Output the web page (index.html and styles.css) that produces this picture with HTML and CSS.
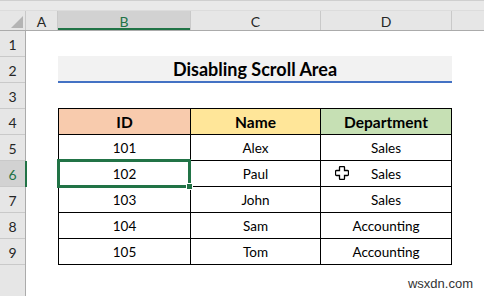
FILE: index.html
```html
<!DOCTYPE html>
<html>
<head>
<meta charset="utf-8">
<link rel="stylesheet" href="styles.css">
</head>
<body>
<div class="app">
  <div class="topbar"></div>
  <div class="colheads">
    <div class="ch corner"><svg class="tri" width="12" height="12" viewBox="0 0 12 12"><polygon points="12,0 12,12 0,12" fill="#b4b4b4"/></svg></div>
    <div class="ch col-a">A</div>
    <div class="ch col-b sel">B</div>
    <div class="ch col-c">C</div>
    <div class="ch col-d">D</div>
    <div class="ch col-e"></div>
  </div>
  <div class="main">
    <div class="rowheads">
      <div class="rh">1</div>
      <div class="rh">2</div>
      <div class="rh">3</div>
      <div class="rh">4</div>
      <div class="rh">5</div>
      <div class="rh sel">6</div>
      <div class="rh">7</div>
      <div class="rh">8</div>
      <div class="rh">9</div>
      <div class="rh-rest"></div>
    </div>
    <div class="canvas">
      <div class="spacer1"></div>
      <div class="title">Disabling Scroll Area</div>
      <div class="spacer3"></div>
      <div class="table">
        <div class="cell head h-id">ID</div>
        <div class="cell head h-name">Name</div>
        <div class="cell head h-dept">Department</div>

        <div class="cell">101</div>
        <div class="cell">Alex</div>
        <div class="cell">Sales</div>

        <div class="cell active">102<span class="selbox"><span class="handle"></span></span></div>
        <div class="cell">Paul</div>
        <div class="cell">Sales<svg class="cursor" width="14" height="14" viewBox="0 0 14 14"><path d="M4.5 1.5 Q4.5 0.5 5.5 0.5 H8.5 Q9.5 0.5 9.5 1.5 V4.5 H12.5 Q13.5 4.5 13.5 5.5 V8.5 Q13.5 9.5 12.5 9.5 H9.5 V12.5 Q9.5 13.5 8.5 13.5 H5.5 Q4.5 13.5 4.5 12.5 V9.5 H1.5 Q0.5 9.5 0.5 8.5 V5.5 Q0.5 4.5 1.5 4.5 H4.5 Z" fill="#fff" stroke="#000" stroke-width="1.3"/></svg></div>

        <div class="cell">103</div>
        <div class="cell">John</div>
        <div class="cell">Sales</div>

        <div class="cell">104</div>
        <div class="cell">Sam</div>
        <div class="cell">Accounting</div>

        <div class="cell">105</div>
        <div class="cell">Tom</div>
        <div class="cell">Accounting</div>
      </div>
      <div class="watermark">wsxdn.com</div>
    </div>
  </div>
</div>
</body>
</html>
```
FILE: styles.css
```css
* { box-sizing: border-box; }
html, body { margin: 0; padding: 0; }
body {
  width: 484px;
  height: 296px;
  overflow: hidden;
  background: #ffffff;
  font-family: Lato, "Open Sans", sans-serif;
  color: #000;
}
.app {
  display: flex;
  flex-direction: column;
  height: 296px;
}
.topbar {
  height: 11px;
  background: #e9e9e9;
  border-top: 1px solid #cfcfcf;
  border-bottom: 1px solid #dcdcdc;
}
.colheads {
  display: flex;
  height: 20px;
  background: #e6e6e6;
  border-bottom: 1px solid #ababab;
}
.ch {
  height: 100%;
  border-right: 1px solid #c9c9c9;
  display: flex;
  align-items: center;
  justify-content: center;
  font-size: 14px;
  color: #262626;
  padding-top: 1px;
}
.corner {
  width: 26px;
  justify-content: flex-end;
  align-items: flex-end;
  padding: 0 2px 2px 0;
}
.col-a { width: 32px; }
.col-b { width: 133px; }
.col-c { width: 130px; }
.col-d { width: 131px; }
.col-e { flex: 1; border-right: none; }
.ch.sel {
  background: #d2d2d2;
  color: #217346;
  box-shadow: inset 0 -2px 0 #217346;
}
.main {
  flex: 1;
  display: flex;
  min-height: 0;
}
.rowheads {
  width: 26px;
  display: flex;
  flex-direction: column;
  background: #e6e6e6;
  border-right: 1px solid #ababab;
}
.rh {
  height: 26px;
  flex: none;
  border-bottom: 1px solid #c9c9c9;
  display: flex;
  align-items: center;
  justify-content: center;
  font-size: 14px;
  color: #262626;
  padding-top: 1px;
}
.rh.sel {
  background: #d2d2d2;
  color: #217346;
  box-shadow: 2px 0 0 #217346;
}
.rh-rest { flex: 1; }
.canvas {
  flex: 1;
  position: relative;
  padding-left: 32px;
  display: flex;
  flex-direction: column;
}
.spacer1 { height: 25px; flex: none; }
.spacer3 { height: 25px; flex: none; }
.title {
  width: 394px;
  height: 27px;
  flex: none;
  background: #f2f2f2;
  border-bottom: 2px solid #4472c4;
  display: flex;
  align-items: center;
  justify-content: center;
  font-weight: 700;
  font-size: 18px;
  padding-top: 1px;
}
.table {
  width: 394px;
  display: grid;
  grid-template-columns: 131px 129px 130px;
  grid-auto-rows: 25px;
  gap: 1px;
  padding: 1px;
  background: #000;
}
.cell {
  background: #fff;
  display: flex;
  align-items: center;
  justify-content: center;
  font-size: 13.5px;
  position: relative;
  padding-top: 1px;
}
.cell.active { z-index: 2; }
.cell.head {
  font-weight: 700;
  font-size: 15.5px;
}
.h-id { background: #f8cbad; }
.h-name { background: #ffe699; }
.h-dept { background: #c6e0b4; }
.selbox {
  position: absolute;
  left: -2px;
  top: -2px;
  right: -1px;
  bottom: -2px;
  border: 3px solid #217346;
}
.handle {
  position: absolute;
  right: -5px;
  bottom: -5px;
  width: 7px;
  height: 7px;
  background: #217346;
  border: 1px solid #fff;
}
.cursor {
  position: absolute;
  left: 14px;
  top: 5px;
}
.watermark {
  position: absolute;
  right: 11px;
  bottom: 5px;
  font-family: "Liberation Sans", Arial, sans-serif;
  font-size: 13px;
  color: #333;
}
```
